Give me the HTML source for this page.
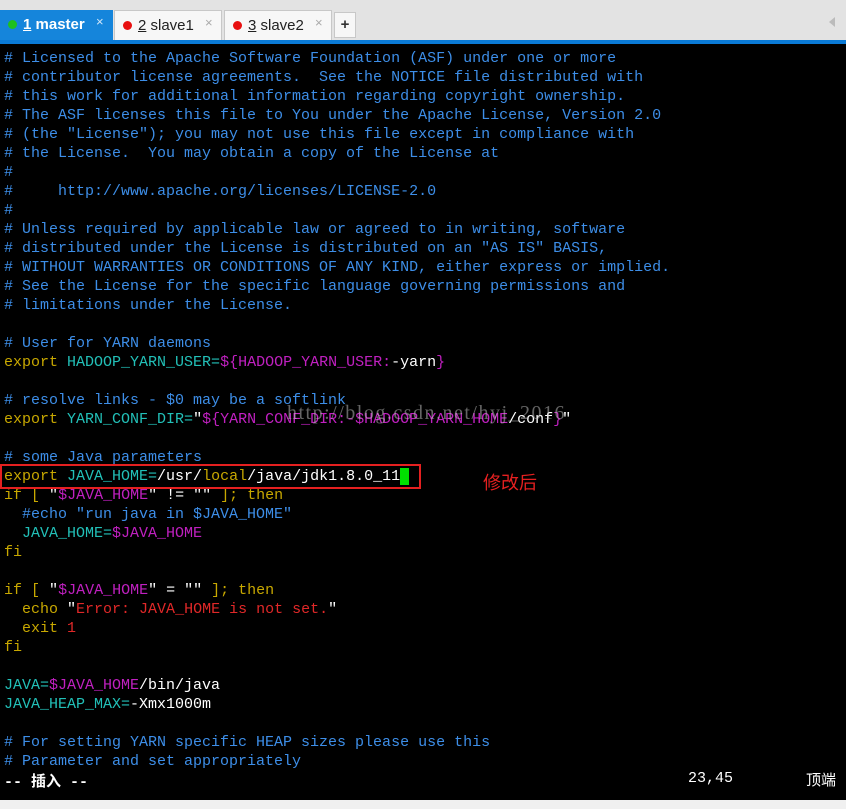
<!DOCTYPE html>
<html><head><meta charset="utf-8"><style>
body{margin:0;width:846px;height:809px;background:#000;overflow:hidden;position:relative;font-family:"Liberation Sans","Noto Sans CJK SC",sans-serif}
#bar{position:absolute;left:0;top:0;width:846px;height:40px;background:#e3e3e3}
#blue{position:absolute;left:0;top:40px;width:846px;height:4px;background:#0a7ad6}
.tab{position:absolute;top:10px;height:30px;box-sizing:border-box;font-size:15px;line-height:30px}
.t1{left:0;width:113px;background:#1585db;color:#fff;font-weight:bold}
.t2,.t3{background:#f7f7f7;border:1px solid #c8c8c8;border-bottom:none;color:#222;top:10px;height:30px}
.t2{left:114px;width:108px}.t3{left:224px;width:108px}
.dot{position:absolute;left:8px;top:10px;width:9px;height:9px;border-radius:50%}
.x{position:absolute;top:-3px;font-size:13px;color:#aaa;font-weight:normal}
#term{position:absolute;left:4px;top:49px;font-family:"Liberation Mono",monospace;font-size:15px;line-height:19px;white-space:pre;color:#fff}
.c{color:#3d8ee8}.y{color:#c8a800}.t{color:#22c0b8}.m{color:#c020c0}.r{color:#e02828}
#bot{position:absolute;left:0;top:800px;width:846px;height:9px;background:#f0f0f0}
</style></head><body>
<div id="bar"></div><div id="blue"></div>
<div class="tab t1"><span class="dot" style="background:#1ec01e"></span><span style="position:absolute;left:23px"><u>1</u> master</span><span class="x" style="left:96px;color:#d0e6f8">×</span></div>
<div class="tab t2"><span class="dot" style="background:#e81010"></span><span style="position:absolute;left:23px"><u>2</u> slave1</span><span class="x" style="left:90px">×</span></div>
<div class="tab t3"><span class="dot" style="background:#e81010"></span><span style="position:absolute;left:23px"><u>3</u> slave2</span><span class="x" style="left:90px">×</span></div>
<div class="tab" style="left:334px;width:22px;height:26px;top:12px;background:#f7f7f7;border:1px solid #c8c8c8;text-align:center;line-height:24px;font-weight:bold;color:#333">+</div>
<div style="position:absolute;left:829px;top:17px;width:0;height:0;border-top:5px solid transparent;border-bottom:5px solid transparent;border-right:6px solid #bbb"></div>
<div id="term"><span class="c"># Licensed to the Apache Software Foundation (ASF) under one or more
# contributor license agreements.  See the NOTICE file distributed with
# this work for additional information regarding copyright ownership.
# The ASF licenses this file to You under the Apache License, Version 2.0
# (the "License"); you may not use this file except in compliance with
# the License.  You may obtain a copy of the License at
#
#     http://www.apache.org/licenses/LICENSE-2.0
#
# Unless required by applicable law or agreed to in writing, software
# distributed under the License is distributed on an "AS IS" BASIS,
# WITHOUT WARRANTIES OR CONDITIONS OF ANY KIND, either express or implied.
# See the License for the specific language governing permissions and
# limitations under the License.</span>

<span class="c"># User for YARN daemons</span>
<span class="y">export</span> <span class="t">HADOOP_YARN_USER=</span><span class="m">${HADOOP_YARN_USER:</span>-yarn<span class="m">}</span>

<span class="c"># resolve links - $0 may be a softlink</span>
<span class="y">export</span> <span class="t">YARN_CONF_DIR=</span>"<span class="m">${YARN_CONF_DIR:-$HADOOP_YARN_HOME</span>/conf<span class="m">}</span>"

<span class="c"># some Java parameters</span>
<span class="y">export</span> <span class="t">JAVA_HOME=</span>/usr/<span class="y">local</span>/java/jdk1.8.0_11<span style="background:#00e000"> </span>
<span class="y">if</span> <span class="y">[</span> "<span class="m">$JAVA_HOME</span>" != "" <span class="y">];</span> <span class="y">then</span>
  <span class="c">#echo "run java in $JAVA_HOME"</span>
  <span class="t">JAVA_HOME=</span><span class="m">$JAVA_HOME</span>
<span class="y">fi</span>

<span class="y">if</span> <span class="y">[</span> "<span class="m">$JAVA_HOME</span>" = "" <span class="y">];</span> <span class="y">then</span>
  <span class="y">echo</span> "<span class="r">Error: JAVA_HOME is not set.</span>"
  <span class="y">exit</span> <span class="r">1</span>
<span class="y">fi</span>

<span class="t">JAVA=</span><span class="m">$JAVA_HOME</span>/bin/java
<span class="t">JAVA_HEAP_MAX=</span>-Xmx1000m

<span class="c"># For setting YARN specific HEAP sizes please use this
# Parameter and set appropriately</span>
<b>-- <span style="font-family:'Noto Sans CJK SC',sans-serif">插入</span> --</b></div>
<div style="position:absolute;left:688px;top:770px;font-family:'Liberation Mono',monospace;font-size:15px;color:#fff">23,45</div>
<div style="position:absolute;left:806px;top:769px;font-family:'Noto Sans CJK SC',sans-serif;font-size:15px;color:#fff">顶端</div>
<div style="position:absolute;left:0;top:464px;width:417px;height:21px;border:2px solid #e52020"></div>
<div style="position:absolute;left:483px;top:469px;font-family:'Noto Sans CJK SC',sans-serif;font-size:18px;color:#e52020">修改后</div>
<div style="position:absolute;left:287px;top:402px;font-family:'Liberation Serif',serif;font-size:20px;letter-spacing:1.5px;color:rgba(200,200,200,0.5)">http://blog.csdn.net/hyj_2016</div>
<div id="bot"></div>
</body></html>
